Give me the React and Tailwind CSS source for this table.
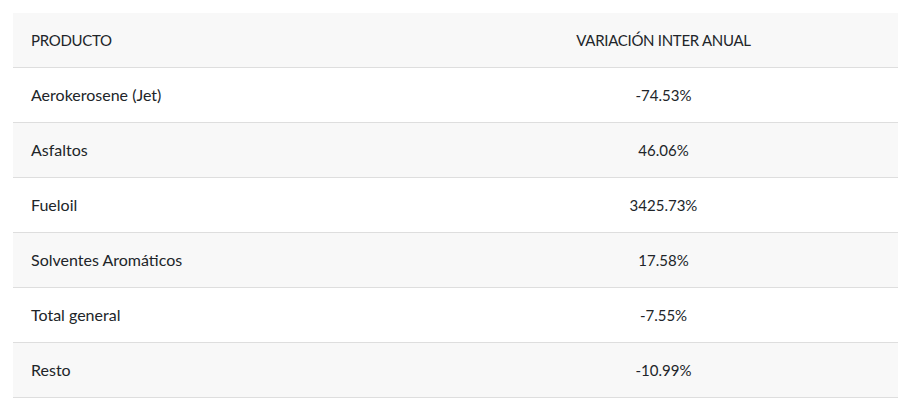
import React from "react";

const rows = [
  { producto: "Aerokerosene (Jet)", variacion: "-74.53%" },
  { producto: "Asfaltos", variacion: "46.06%" },
  { producto: "Fueloil", variacion: "3425.73%" },
  { producto: "Solventes Aromáticos", variacion: "17.58%" },
  { producto: "Total general", variacion: "-7.55%" },
  { producto: "Resto", variacion: "-10.99%" },
];

const App = () => {
  return (
    <div className="w-[911px] h-[409px] bg-white pt-[13px] pl-[13px] font-['Lato',sans-serif] text-[15px] text-[#212529]">
      <div className="w-[885px]">
        <div className="grid grid-cols-[416px_1fr] h-[55px] items-center bg-[#f8f8f8] border-b border-[#dedede] tracking-[-0.3px]">
          <div className="pl-[18px]">PRODUCTO</div>
          <div className="text-center">VARIACIÓN INTER ANUAL</div>
        </div>
        {rows.map((row, i) => (
          <div
            key={row.producto}
            className={
              "grid grid-cols-[416px_1fr] h-[55px] items-center border-b border-[#dedede] " +
              (i % 2 === 1 ? "bg-[#f8f8f8]" : "bg-white")
            }
          >
            <div className="pl-[18px] text-[16px]">{row.producto}</div>
            <div className="text-center">{row.variacion}</div>
          </div>
        ))}
      </div>
    </div>
  );
};

export default App;
